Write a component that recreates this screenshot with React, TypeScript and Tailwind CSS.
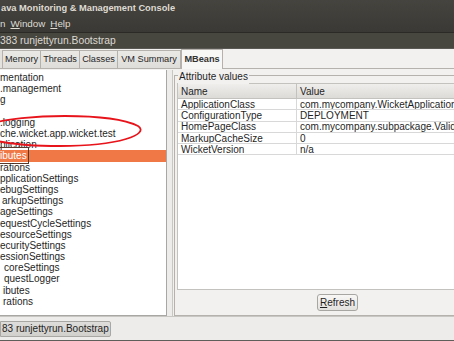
const treeRows: { text: string; indent: number; selected?: boolean }[] = [
	{ text: "mentation", indent: 0 },
	{ text: ".management", indent: 0 },
	{ text: "g", indent: 0 },
	{ text: "", indent: 0 },
	{ text: ".logging", indent: 0 },
	{ text: "che.wicket.app.wicket.test", indent: 0 },
	{ text: "plication", indent: 0 },
	{ text: "ibutes", indent: 0, selected: true },
	{ text: "rations", indent: 0 },
	{ text: "pplicationSettings", indent: 0 },
	{ text: "ebugSettings", indent: 0 },
	{ text: "arkupSettings", indent: 2 },
	{ text: "ageSettings", indent: 0 },
	{ text: "equestCycleSettings", indent: 0 },
	{ text: "esourceSettings", indent: 0 },
	{ text: "ecuritySettings", indent: 0 },
	{ text: "essionSettings", indent: 0 },
	{ text: "coreSettings", indent: 4 },
	{ text: "questLogger", indent: 4 },
	{ text: "ibutes", indent: 3 },
	{ text: "rations", indent: 3 },
];

const attributes = [
	{ name: "ApplicationClass", value: "com.mycompany.WicketApplication" },
	{ name: "ConfigurationType", value: "DEPLOYMENT" },
	{ name: "HomePageClass", value: "com.mycompany.subpackage.Valida" },
	{ name: "MarkupCacheSize", value: "0" },
	{ name: "WicketVersion", value: "n/a" },
];

const tabs = [
	{ label: "Memory", w: "w-[38px]" },
	{ label: "Threads", w: "w-[39px]" },
	{ label: "Classes", w: "w-[38px]" },
	{ label: "VM Summary", w: "w-[63px]" },
];

export default function App() {
	return (
		<div className="relative w-[454px] h-[341px] overflow-hidden bg-[#f2f1f0] flex flex-col font-['Liberation_Sans',Arial,sans-serif] text-[10px] text-[#1f1f1f]">
			{/* Window title + menu */}
			<div className="h-[32px] bg-gradient-to-b from-[#45443f] to-[#3a3935] text-[#dfdbd2] flex flex-col">
				<div className="h-[17px] flex items-center pl-[1px] font-bold text-[9.3px] whitespace-nowrap">
					ava Monitoring &amp; Management Console
				</div>
				<div className="h-[15px] flex items-center gap-[5px] text-[9.8px] whitespace-nowrap">
					<span>n</span>
					<span>
						<span className="underline">W</span>indow
					</span>
					<span>
						<span className="underline">H</span>elp
					</span>
				</div>
			</div>

			{/* Internal frame title */}
			<div className="h-[17px] border-t border-[#2b2a27] bg-[#47463f] text-[#dcd9d2] flex items-center text-[10.3px] whitespace-nowrap border-b border-b-[#5a5953]">
				383 runjettyrun.Bootstrap
			</div>

			{/* Tabs */}
			<div className="h-[20px] flex items-end bg-[#f2f1f0] border-b border-[#b5b2ad] text-[9.2px]">
				<div className="w-[3px] h-[18px] bg-[#e4e2df] border-r border-[#b5b2ad]" />
				{tabs.map((t) => (
					<div
						key={t.label}
						className={`${t.w} h-[18px] flex items-center justify-center bg-gradient-to-b from-[#ebe9e6] to-[#dfddd9] border-r border-t border-[#b5b2ad] whitespace-nowrap`}
					>
						{t.label}
					</div>
				))}
				<div className="w-[42px] h-[20px] -mb-px flex items-center justify-center bg-[#f7f7f6] border-x border-t border-[#b5b2ad] font-bold text-[#333]">
					MBeans
				</div>
			</div>

			{/* Content */}
			<div className="flex-1 flex min-h-0 pt-[1px]">
				{/* Tree */}
				<div className="relative w-[167px] shrink-0 bg-white border-r border-b border-[#a9a7a3] flex flex-col pt-[2px] overflow-hidden">
					{treeRows.map((r, i) => (
						<div
							key={i}
							className={`h-[11.2px] shrink-0 flex items-center whitespace-nowrap ${r.selected ? "bg-[#f07746] text-white" : "text-[#1f1f1f]"}`}
						>
							<span
								style={{ marginLeft: r.indent }}
								className={r.selected ? "outline outline-1 outline-[#5a3a2a] pr-px" : ""}
							>
								{r.text}
							</span>
						</div>
					))}
				</div>

				{/* Splitter */}
				<div className="w-[6px] shrink-0 bg-[#edeceb] border-r border-[#c9c7c3]" />

				{/* Attribute values group */}
				<div className="flex-1 flex flex-col pt-[5px] pl-[1px]">
					<div className="relative flex-1 flex flex-col border-l border-t border-b border-[#b5b2ad] pt-[7px] pl-[2px]">
						<span className="absolute -top-[7px] left-[3px] bg-[#f2f1f0] px-[1px]">Attribute values</span>
						<div className="h-[207px] bg-white border-l border-t border-b border-[#c4c2be] flex flex-col">
							{/* header */}
							<div className="h-[15px] shrink-0 flex bg-gradient-to-b from-[#efeeec] to-[#dddbd7] border-b border-[#c4c2be]">
								<div className="w-[119px] pl-[3px] flex items-center border-r border-[#c4c2be]">Name</div>
								<div className="flex-1 pl-[3px] flex items-center">Value</div>
							</div>
							{attributes.map((a) => (
								<div key={a.name} className="h-[11.3px] shrink-0 flex border-b border-[#d8d8d8] whitespace-nowrap">
									<div className="w-[119px] pl-[3px] flex items-center border-r border-[#d8d8d8] overflow-hidden">{a.name}</div>
									<div className="flex-1 pl-[3px] flex items-center overflow-hidden">{a.value}</div>
								</div>
							))}
						</div>
						<div className="flex-1 flex items-center pl-[140px]">
							<button className="h-[17px] w-[41px] rounded-[3px] border border-[#a8a6a2] bg-gradient-to-b from-[#f8f7f6] to-[#e3e1de] flex items-center justify-center">
								<span>
									<span className="underline">R</span>efresh
								</span>
							</button>
						</div>
					</div>
				</div>
			</div>

			{/* Taskbar */}
			<div className="h-[25px] bg-[#edeceb] border-t border-[#c9c7c3] border-b border-b-[#5f5e5a] flex items-center">
				<div className="h-[16px] w-[111px] bg-gradient-to-b from-[#dfdddb] to-[#d2d0cc] border border-[#a9a7a3] rounded-r-[2px] flex items-center pl-[1px] whitespace-nowrap">
					83 runjettyrun.Bootstrap
				</div>
			</div>

			{/* Red annotation ellipse */}
			<svg className="absolute left-0 top-0 pointer-events-none" width="454" height="341">
				<path
					d="M-10 124 C 20 114, 110 112, 138 126 C 150 134, 120 146, 60 146 C 10 146, -20 140, -20 130"
					fill="none"
					stroke="#e8141b"
					strokeWidth="1.8"
				/>
			</svg>
		</div>
	);
}
